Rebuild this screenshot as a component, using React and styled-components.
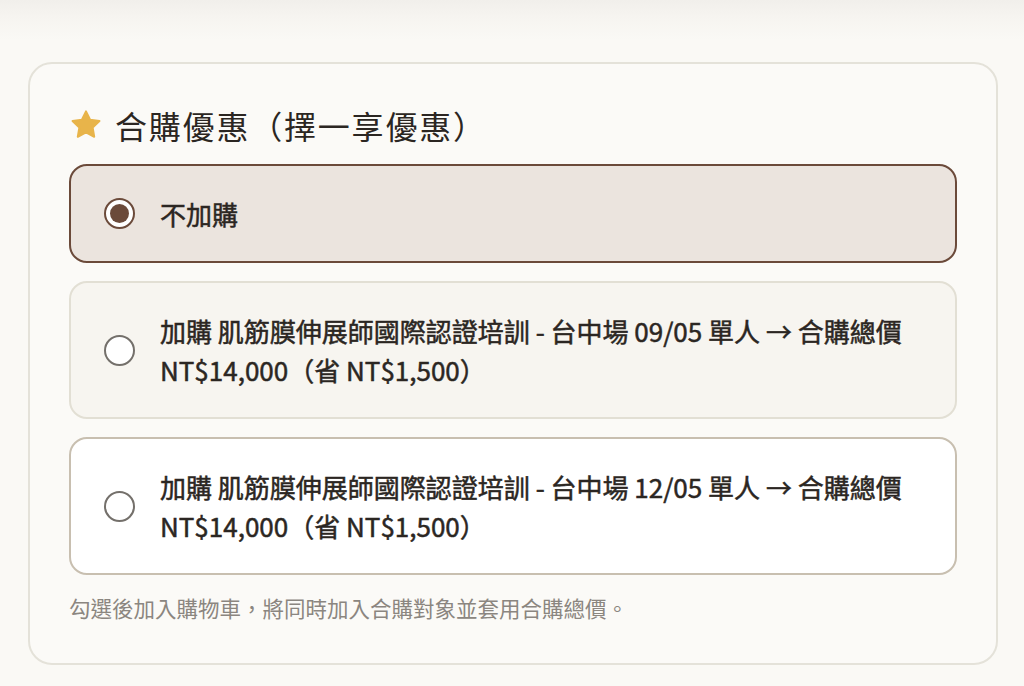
import React, { useState } from 'react';
import styled, { createGlobalStyle } from 'styled-components';

const GlobalStyle = createGlobalStyle`
  html, body {
    margin: 0;
    padding: 0;
    background: #faf9f5;
  }
  body {
    font-family: "Noto Sans CJK TC", "Noto Sans", sans-serif;
    color: #2b2622;
  }
`;

const Page = styled.div`
  min-height: 686px;
  background: #faf9f5;
`;

const TopShade = styled.div`
  height: 40px;
  background: linear-gradient(to bottom, #f1efeb 0%, #f6f4f0 40%, #faf9f5 100%);
`;

const Card = styled.section`
  margin: 22px 26px 0 28px;
  padding: 40px 39px 38px;
  border: 2px solid #e4e2d9;
  border-radius: 24px;
  background: #fbfaf7;
`;

const Title = styled.h2`
  display: flex;
  align-items: center;
  gap: 12px;
  margin: 0 0 18px;
  font-family: "Noto Sans CJK TC", sans-serif;
  font-size: 32px;
  font-weight: 400;
  letter-spacing: 1.8px;
  line-height: 42px;
  color: #2b2622;
`;

const Options = styled.div`
  display: flex;
  flex-direction: column;
  gap: 18px;
`;

const tones = {
  selected: { bg: '#ebe4de', border: '#6b4a3a' },
  muted: { bg: '#f7f5f0', border: '#e2dfd4' },
  plain: { bg: '#ffffff', border: '#c8bfb0' },
};

const Option = styled.label`
  display: flex;
  align-items: center;
  gap: 25px;
  padding: 28px 33px;
  border: 2px solid ${(p) => tones[p.$tone].border};
  border-radius: 18px;
  background: ${(p) => tones[p.$tone].bg};
  cursor: pointer;
`;

const Radio = styled.span`
  flex: none;
  box-sizing: border-box;
  width: 31px;
  height: 31px;
  border-radius: 50%;
  border: ${(p) => (p.$checked ? '2.5px solid #6b4a3a' : '2px solid #74706b')};
  background: #fff;
  display: flex;
  align-items: center;
  justify-content: center;

  &::after {
    content: '';
    display: ${(p) => (p.$checked ? 'block' : 'none')};
    width: 19px;
    height: 19px;
    border-radius: 50%;
    background: #6b4a3a;
  }
`;

const OptionText = styled.span`
  font-family: "Noto Sans CJK TC", sans-serif;
  font-size: 26px;
  font-weight: 400;
  -webkit-text-stroke: 0.5px #2b2622;
  line-height: 39px;
  color: #2b2622;
`;

const Note = styled.p`
  margin: 16px 0 0;
  font-family: "Noto Sans CJK TC", sans-serif;
  font-size: 21.5px;
  line-height: 34px;
  color: #8b8680;
`;

function Star() {
  return (
    <svg width="34" height="34" viewBox="0 0 24 24" aria-hidden="true">
      <path
        d="M12 2.4l2.9 5.9 6.6.9-4.8 4.6 1.1 6.5L12 17.2l-5.8 3.1 1.1-6.5-4.8-4.6 6.6-.9z"
        fill="#e8b44a"
        stroke="#e8b44a"
        strokeWidth="1.4"
        strokeLinejoin="round"
      />
    </svg>
  );
}

const choices = [
  { id: 'none', text: '不加購', tone: 'muted' },
  {
    id: '0905',
    text: '加購 肌筋膜伸展師國際認證培訓 - 台中場 09/05 單人 → 合購總價 NT$14,000（省 NT$1,500）',
    tone: 'muted',
  },
  {
    id: '1205',
    text: '加購 肌筋膜伸展師國際認證培訓 - 台中場 12/05 單人 → 合購總價 NT$14,000（省 NT$1,500）',
    tone: 'plain',
  },
];

export default function App() {
  const [picked, setPicked] = useState('none');

  return (
    <Page>
      <GlobalStyle />
      <TopShade />
      <Card>
        <Title>
          <Star />
          合購優惠（擇一享優惠）
        </Title>
        <Options>
          {choices.map((c) => {
            const checked = picked === c.id;
            return (
              <Option
                key={c.id}
                $tone={checked ? 'selected' : c.tone}
                onClick={() => setPicked(c.id)}
              >
                <Radio $checked={checked} />
                <OptionText>{c.text}</OptionText>
              </Option>
            );
          })}
        </Options>
        <Note>勾選後加入購物車，將同時加入合購對象並套用合購總價。</Note>
      </Card>
    </Page>
  );
}
